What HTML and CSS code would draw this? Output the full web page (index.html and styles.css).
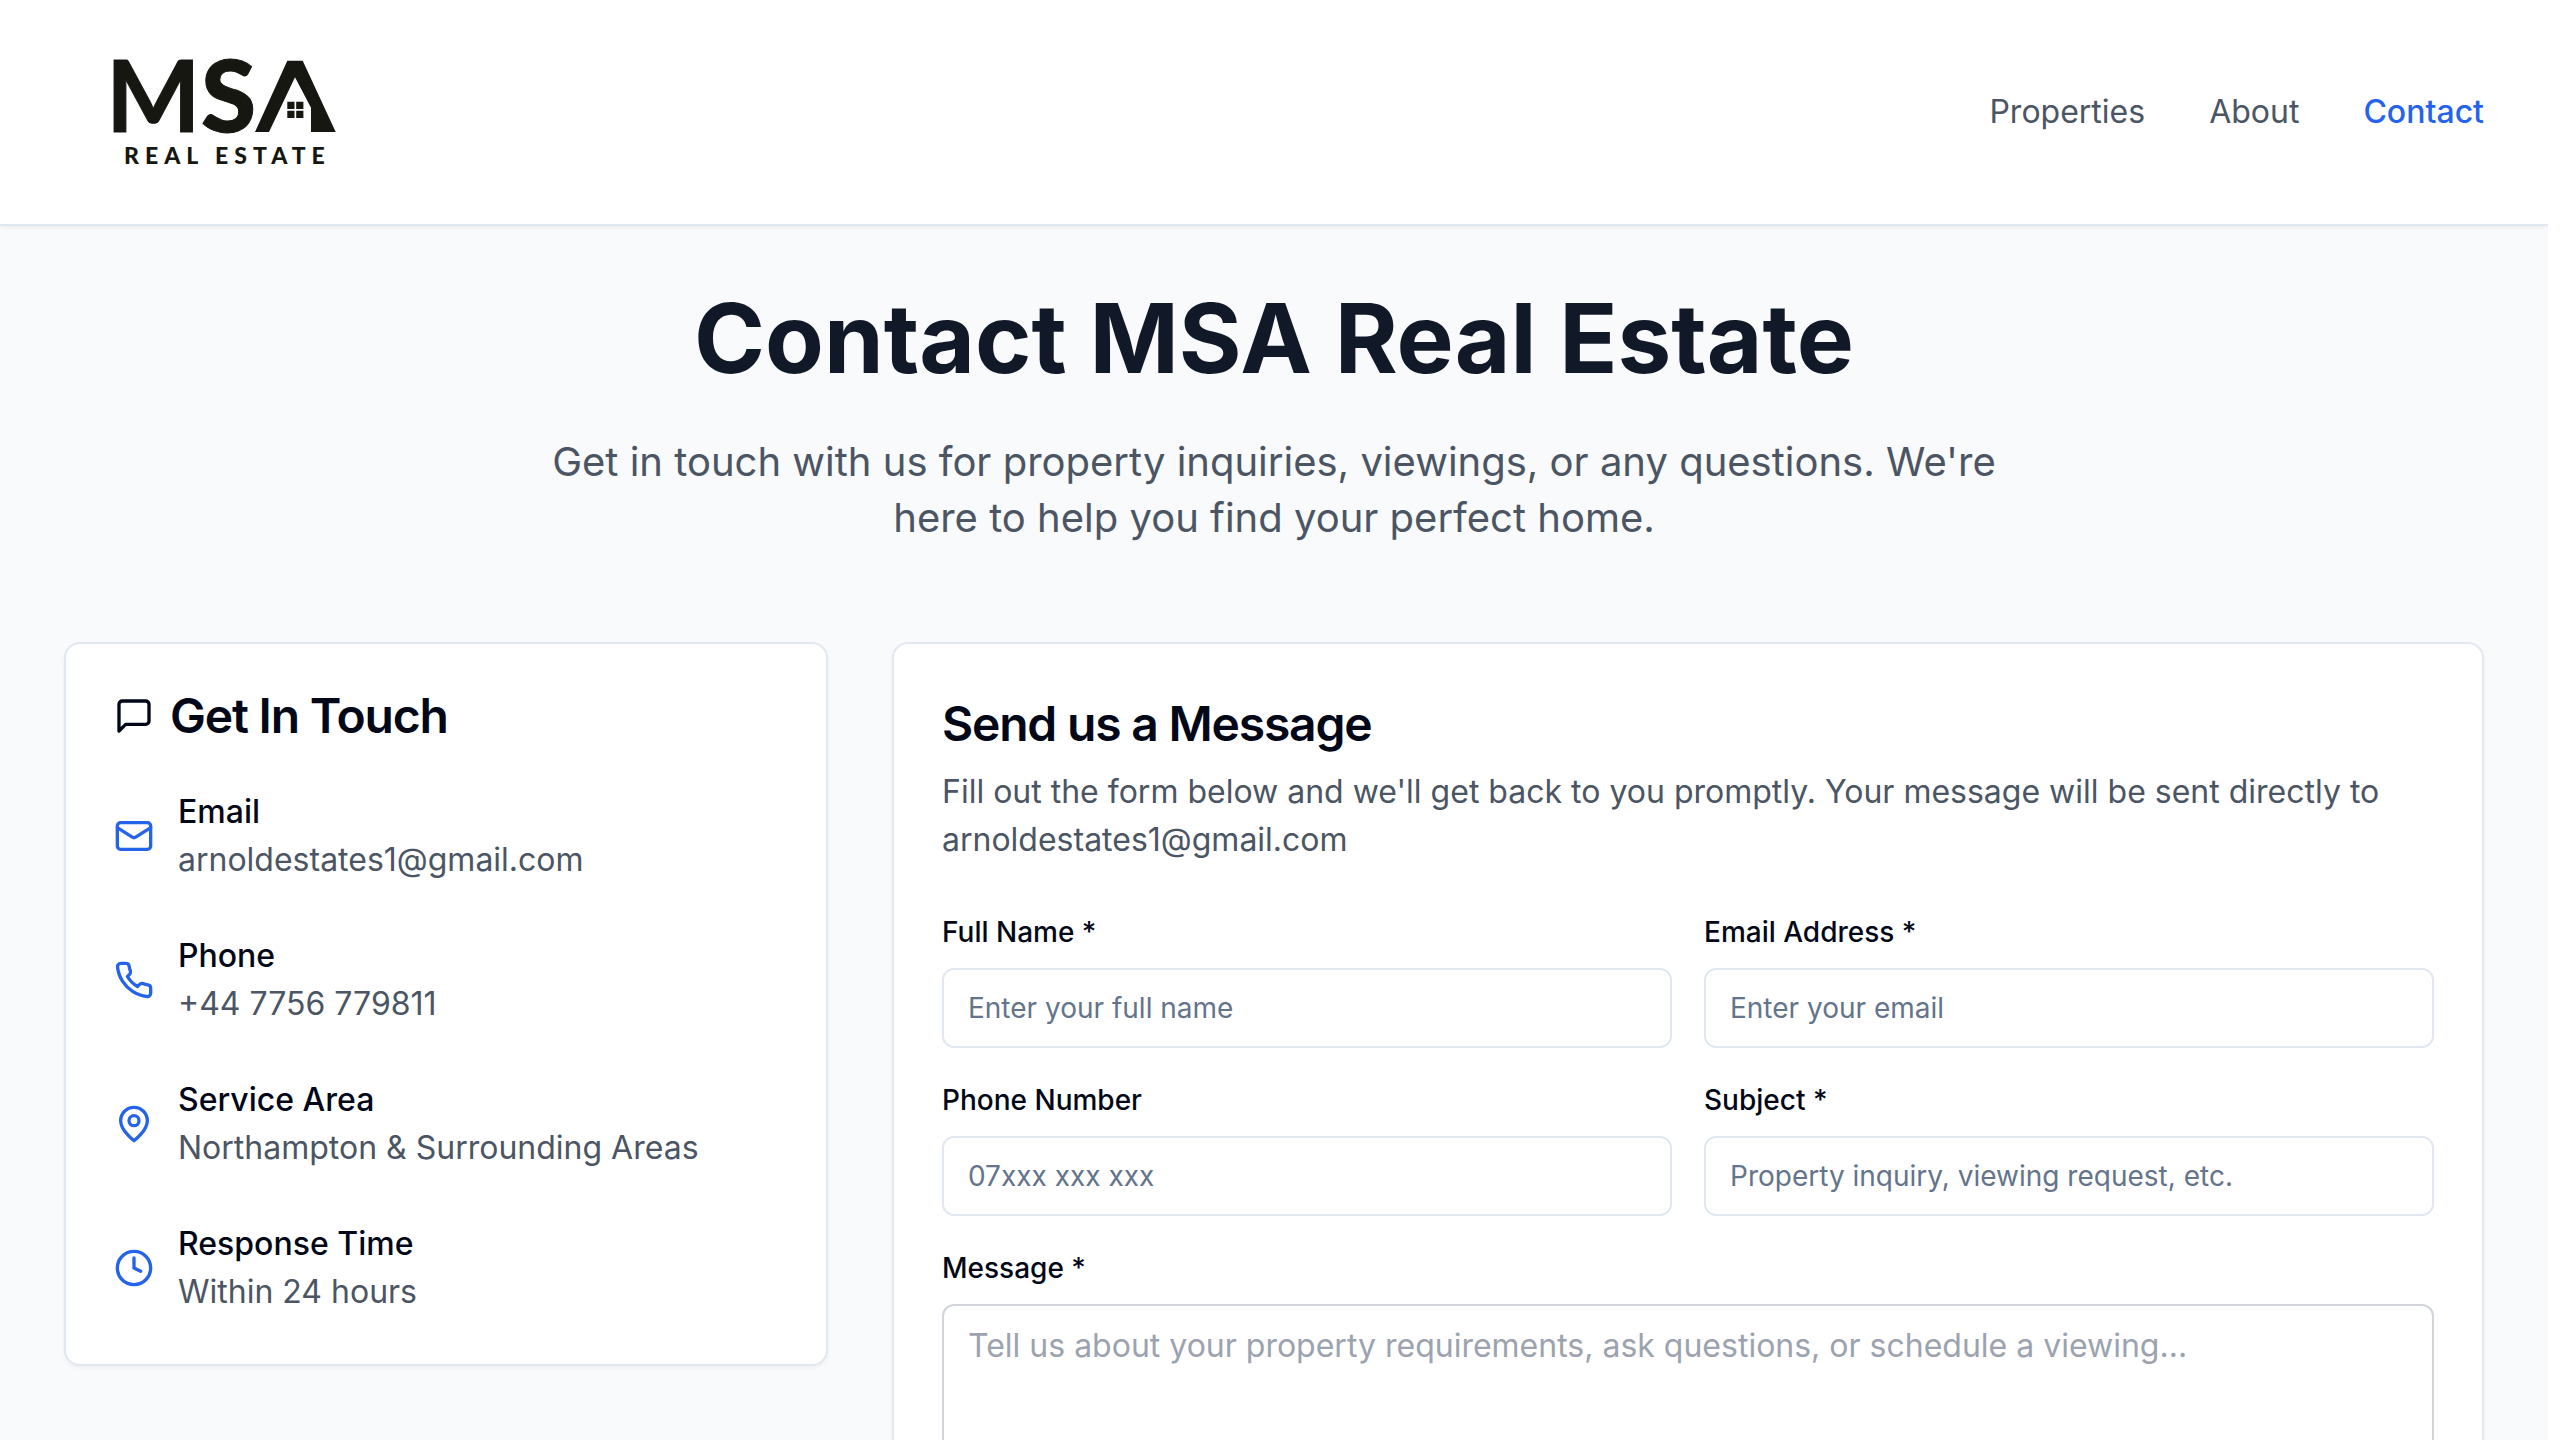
FILE: index.html
```html
<!DOCTYPE html>
<html lang="en">
<head>
  <meta charset="utf-8">
  <meta name="viewport" content="width=device-width, initial-scale=1">
  <title>Contact MSA Real Estate</title>
  <link rel="stylesheet" href="styles.css">
</head>
<body>
  <div class="page">
    <header class="site-header">
      <a class="brand" href="#" aria-label="MSA Real Estate">
        <svg class="brand-logo" viewBox="0 0 320 160" role="img" aria-hidden="true">
          <text class="logo-name" x="42" y="100">M</text>
          <text class="logo-name logo-name-heavy" x="137" y="100">S</text>
          <path d="M191 100 223.300 28.700H238.700L271.700 100H247V75.700L231 45.300 205 100Z"/>
          <path d="M223.300 69.700h7.200v7.200h-7.200zM232.200 69.700h7.200v7.200h-7.200zM223.300 78.700h7.200v7.200h-7.200zM232.200 78.700h7.200v7.200h-7.200z"/>
          <text class="logo-tag" x="60" y="132">REAL ESTATE</text>
        </svg>
      </a>
      <nav class="site-nav">
        <a class="nav-link" href="#">Properties</a>
        <a class="nav-link" href="#">About</a>
        <a class="nav-link nav-link-active" href="#" aria-current="page">Contact</a>
      </nav>
    </header>

    <main class="content">
      <section class="intro">
        <h1 class="intro-title">Contact MSA Real Estate</h1>
        <p class="intro-text">Get in touch with us for property inquiries, viewings, or any questions. We're here to help you find your perfect home.</p>
      </section>

      <div class="columns">
        <section class="card">
          <h2 class="card-title card-title-icon">
            <svg class="icon" viewBox="0 0 24 24"><path d="M21 15a2 2 0 0 1-2 2H7l-4 4V5a2 2 0 0 1 2-2h14a2 2 0 0 1 2 2z"/></svg>
            Get In Touch
          </h2>
          <ul class="details">
            <li class="detail">
              <svg class="icon icon-blue" viewBox="0 0 24 24"><rect width="20" height="16" x="2" y="4" rx="2"/><path d="m22 7-8.970 5.700a1.940 1.940 0 0 1-2.060 0L2 7"/></svg>
              <div>
                <h3 class="detail-name">Email</h3>
                <p class="muted">arnoldestates1@gmail.com</p>
              </div>
            </li>
            <li class="detail">
              <svg class="icon icon-blue" viewBox="0 0 24 24"><path d="M22 16.920v3a2 2 0 0 1-2.180 2 19.790 19.790 0 0 1-8.630-3.070 19.500 19.500 0 0 1-6-6 19.790 19.790 0 0 1-3.070-8.670A2 2 0 0 1 4.110 2h3a2 2 0 0 1 2 1.720 12.840 12.840 0 0 0 .700 2.810 2 2 0 0 1-.450 2.110L8.090 9.910a16 16 0 0 0 6 6l1.270-1.270a2 2 0 0 1 2.110-.450 12.840 12.840 0 0 0 2.810.700A2 2 0 0 1 22 16.920z"/></svg>
              <div>
                <h3 class="detail-name">Phone</h3>
                <p class="muted">+44 7756 779811</p>
              </div>
            </li>
            <li class="detail">
              <svg class="icon icon-blue" viewBox="0 0 24 24"><path d="M20 10c0 6-8 12-8 12s-8-6-8-12a8 8 0 0 1 16 0Z"/><circle cx="12" cy="10" r="3"/></svg>
              <div>
                <h3 class="detail-name">Service Area</h3>
                <p class="muted">Northampton &amp; Surrounding Areas</p>
              </div>
            </li>
            <li class="detail">
              <svg class="icon icon-blue" viewBox="0 0 24 24"><circle cx="12" cy="12" r="10"/><path d="M12 6v6l4 2"/></svg>
              <div>
                <h3 class="detail-name">Response Time</h3>
                <p class="muted">Within 24 hours</p>
              </div>
            </li>
          </ul>
        </section>

        <section class="card">
          <h2 class="card-title">Send us a Message</h2>
          <p class="card-text muted">Fill out the form below and we'll get back to you promptly. Your message will be sent directly to arnoldestates1@gmail.com</p>
          <form class="form">
            <div class="field">
              <label class="label" for="name">Full Name *</label>
              <input class="input" id="name" type="text" placeholder="Enter your full name" required>
            </div>
            <div class="field">
              <label class="label" for="email">Email Address *</label>
              <input class="input" id="email" type="email" placeholder="Enter your email" required>
            </div>
            <div class="field">
              <label class="label" for="phone">Phone Number</label>
              <input class="input" id="phone" type="tel" placeholder="07xxx xxx xxx">
            </div>
            <div class="field">
              <label class="label" for="subject">Subject *</label>
              <input class="input" id="subject" type="text" placeholder="Property inquiry, viewing request, etc." required>
            </div>
            <div class="field field-wide">
              <label class="label" for="message">Message *</label>
              <textarea class="input textarea" id="message" rows="6" placeholder="Tell us about your property requirements, ask questions, or schedule a viewing..." required></textarea>
            </div>
          </form>
        </section>
      </div>
    </main>
  </div>
</body>
</html>
```
FILE: styles.css
```css
*, *::before, *::after {
  box-sizing: border-box;
}

body {
  margin: 0;
  padding-right: 12px;
  background: #ffffff;
  color: #020817;
  font-family: Inter, "Liberation Sans", sans-serif;
  font-size: 32px;
  line-height: 48px;
}

h1, h2, h3, p, ul {
  margin: 0;
  padding: 0;
}

.page {
  height: 100vh;
  overflow: hidden;
  background: #f9fafc;
}

.site-header {
  display: flex;
  align-items: center;
  justify-content: space-between;
  padding: 32px 64px;
  background: #ffffff;
  border-bottom: 2px solid #e2e8f0;
  box-shadow: 0 2px 4px rgba(0, 0, 0, 0.05);
}

.brand {
  display: block;
}

.brand-logo {
  display: block;
  width: 320px;
  height: 160px;
  fill: #161711;
}

.logo-name {
  font-family: Lato, sans-serif;
  font-size: 100px;
  font-weight: 700;
  stroke: #161711;
  stroke-width: 1;
}

.logo-name-heavy {
  font-weight: 900;
}

.logo-tag {
  font-family: Lato, sans-serif;
  font-size: 23px;
  font-weight: 900;
  letter-spacing: 6px;
}

.site-nav {
  display: flex;
  gap: 64px;
}

.nav-link {
  color: #4b5563;
  text-decoration: none;
}

.nav-link-active {
  color: #2563eb;
  font-weight: 500;
}

.content {
  padding: 64px;
}

.intro {
  margin-bottom: 96px;
  text-align: center;
}

.intro-title {
  margin-bottom: 48px;
  color: #111827;
  font-size: 96px;
  font-weight: 700;
  line-height: 96px;
}

.intro-text {
  max-width: 1536px;
  margin: 0 auto;
  color: #4b5563;
  font-size: 40px;
  line-height: 56px;
}

.columns {
  display: grid;
  grid-template-columns: repeat(3, 1fr);
  gap: 64px;
  align-items: start;
}

.card {
  padding: 48px;
  background: #ffffff;
  border: 2px solid #e2e8f0;
  border-radius: 16px;
  box-shadow: 0 2px 4px rgba(0, 0, 0, 0.05);
}

.card + .card {
  grid-column: span 2;
}

.card-title {
  margin-bottom: 12px;
  font-size: 48px;
  font-weight: 600;
  line-height: 64px;
  letter-spacing: -0.025em;
}

.card-title-icon {
  display: flex;
  align-items: center;
  gap: 16px;
  margin-bottom: 48px;
  line-height: 48px;
}

.icon {
  flex: none;
  width: 40px;
  height: 40px;
  fill: none;
  stroke: currentColor;
  stroke-width: 2;
  stroke-linecap: round;
  stroke-linejoin: round;
}

.icon-blue {
  color: #2563eb;
}

.details {
  display: grid;
  gap: 48px;
  list-style: none;
}

.detail {
  display: flex;
  align-items: center;
  gap: 24px;
}

.detail-name {
  font-size: 32px;
  font-weight: 500;
}

.muted {
  color: #4b5563;
}

.card-text {
  margin-bottom: 48px;
}

.form {
  display: grid;
  grid-template-columns: repeat(2, 1fr);
  gap: 32px;
}

.field {
  display: grid;
  gap: 16px;
}

.field-wide {
  grid-column: span 2;
}

.label {
  font-size: 28px;
  font-weight: 500;
  line-height: 40px;
}

.input {
  width: 100%;
  height: 80px;
  padding: 16px 24px;
  background: #ffffff;
  border: 2px solid #e2e8f0;
  border-radius: 12px;
  color: #020817;
  font-family: inherit;
  font-size: 28px;
  line-height: 40px;
}

.input::placeholder {
  color: #64748b;
}

.textarea {
  height: auto;
  border-color: #d1d5db;
  font-size: 32px;
  line-height: 48px;
  resize: none;
}

.textarea::placeholder {
  color: #9ca3af;
}
```
